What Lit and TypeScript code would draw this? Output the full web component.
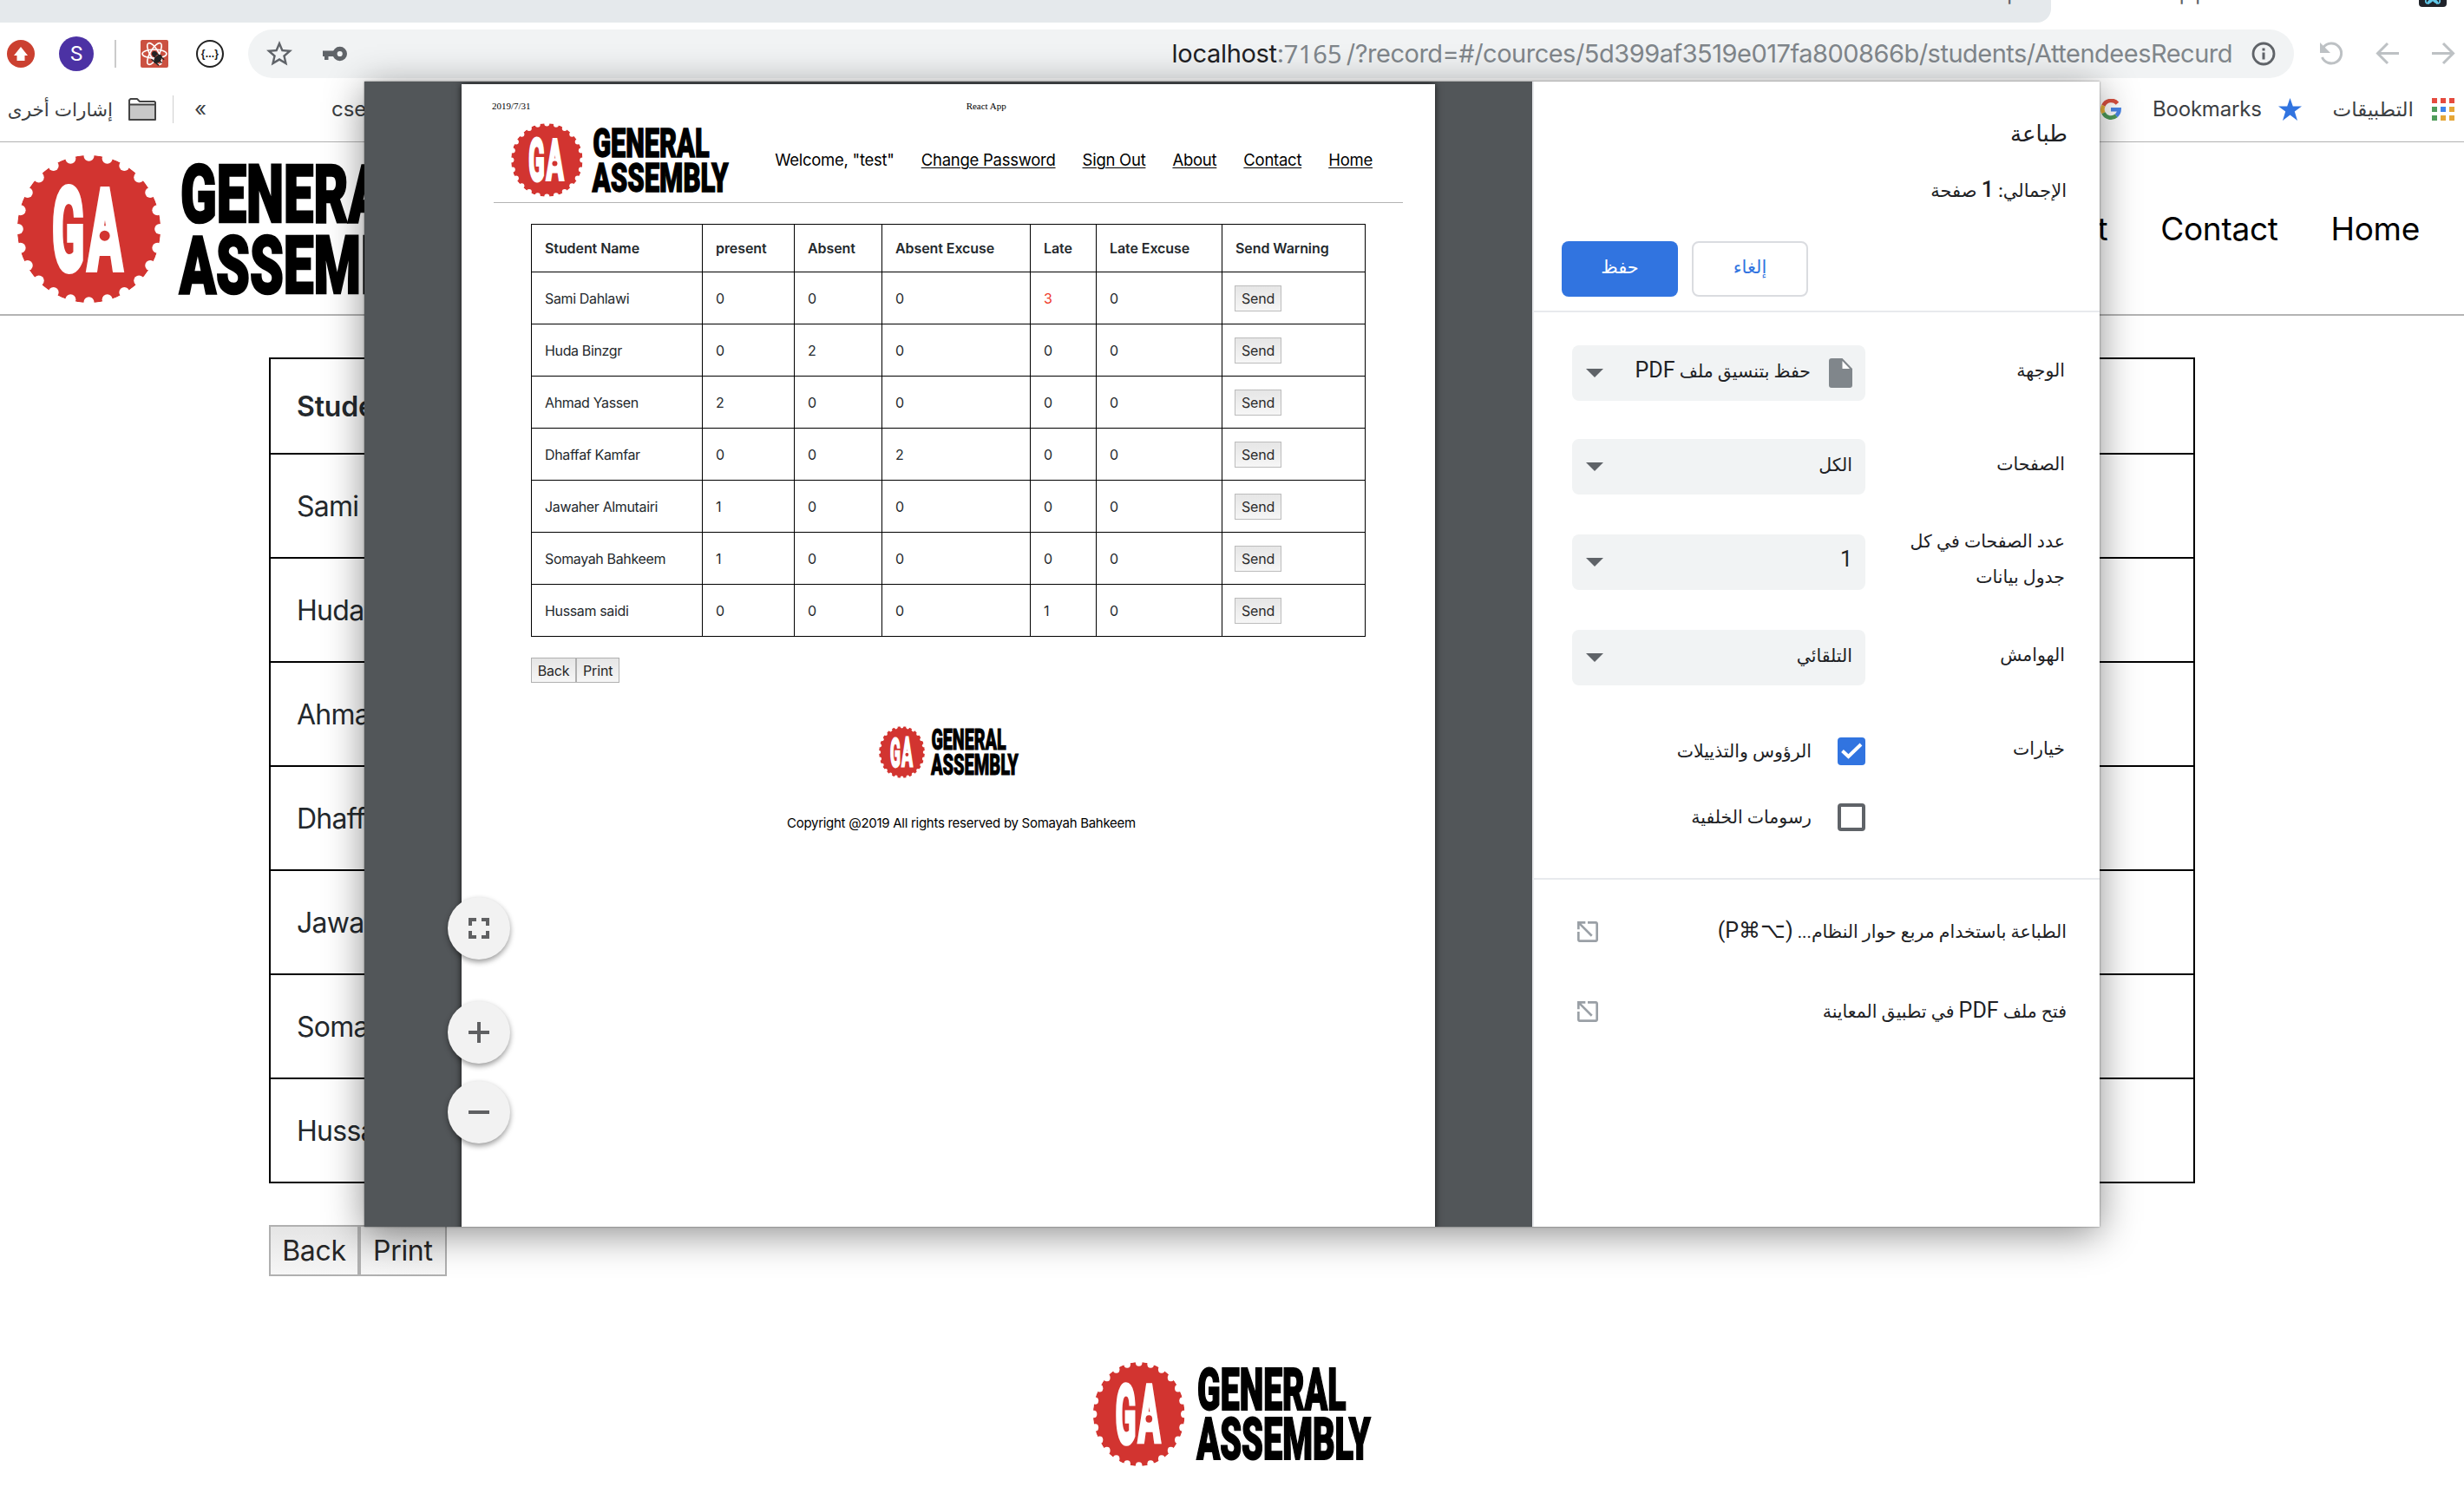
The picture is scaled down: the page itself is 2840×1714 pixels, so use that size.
import { LitElement, html, css, svg, nothing } from "lit";
import { customElement, property } from "lit/decorators.js";

type Student = { name: string; counts: number[] };

const STUDENTS: Student[] = [
  { name: "Sami Dahlawi", counts: [0, 0, 0, 3, 0] },
  { name: "Huda Binzgr", counts: [0, 2, 0, 0, 0] },
  { name: "Ahmad Yassen", counts: [2, 0, 0, 0, 0] },
  { name: "Dhaffaf Kamfar", counts: [0, 0, 2, 0, 0] },
  { name: "Jawaher Almutairi", counts: [1, 0, 0, 0, 0] },
  { name: "Somayah Bahkeem", counts: [1, 0, 0, 0, 0] },
  { name: "Hussam saidi", counts: [0, 0, 0, 1, 0] },
];

const COLUMNS = ["Student Name", "present", "Absent", "Absent Excuse", "Late", "Late Excuse", "Send Warning"];

/* Logo: notched red seal and the two-line wordmark. */
@customElement("ga-logo")
export class GaLogo extends LitElement {
  static styles = css`
    :host { display: block; }
    svg { display: block; width: 100%; height: 100%; overflow: visible; }
    .mono { font-family: Roboto, sans-serif; font-weight: 700; fill: #fff; stroke: #fff; }
    .word { font-family: Roboto, sans-serif; font-weight: 900; fill: #000; stroke: #000; }
  `;
  render() {
    const notches = Array.from({ length: 24 }, (_, i) => {
      const a = (i * Math.PI) / 12;
      return { x: 307.5 + 245 * Math.sin(a), y: 311.5 - 252 * Math.cos(a) };
    });
    return html`<svg viewBox="60 57 1503 509" preserveAspectRatio="none">
      <defs>
        <mask id="seal">
          <ellipse cx="307.5" cy="311.5" rx="248" ry="255" fill="#fff" />
          ${notches.map((n) => svg`<circle cx=${n.x} cy=${n.y} r="18" fill="#000" />`)}
        </mask>
      </defs>
      <ellipse cx="307.5" cy="311.5" rx="248" ry="255" fill="#d23430" mask="url(#seal)" />
      <g class="mono">
        <text transform="translate(181 453) scale(0.37 1)" font-size="396" stroke-width="24" textLength="298" lengthAdjust="spacingAndGlyphs">G</text>
        <text transform="translate(304 449) scale(0.37 1)" font-size="386" stroke-width="24" textLength="320" lengthAdjust="spacingAndGlyphs">A</text>
      </g>
      <polygon points="340,300 384,300 390,388 335,388" fill="#fff" />
      <circle cx="362" cy="335" r="18" fill="#d23430" />
      <g class="word">
        <text transform="translate(624 289) scale(0.5 1)" font-size="280" stroke-width="8" textLength="1610" lengthAdjust="spacingAndGlyphs">GENERAL</text>
        <text transform="translate(620 533) scale(0.5 1)" font-size="280" stroke-width="8" textLength="1882" lengthAdjust="spacingAndGlyphs">ASSEMBLY</text>
      </g>
    </svg>`;
  }
}

/* Attendance grid; --u is the size of one unit and scales the whole table.
   With "compact" set only the name column carries text. */
@customElement("attendance-table")
export class AttendanceTable extends LitElement {
  @property({ type: Boolean }) compact = false;
  static styles = css`
    :host { display: block; box-sizing: border-box; font-family: Inter, sans-serif; color: #24292d; }
    .table { border-right: var(--u) solid #000; border-bottom: var(--u) solid #000; }
    .row { display: grid; grid-template-columns: 197fr 106fr 101fr 171fr 76fr 145fr 165fr; height: calc(60 * var(--u)); }
    .cell {
      box-sizing: border-box; min-width: 0; display: flex; align-items: center; white-space: nowrap;
      border-left: var(--u) solid #000; border-top: var(--u) solid #000; padding-left: calc(15 * var(--u));
      font-size: calc(16 * var(--u)); letter-spacing: calc(-0.36 * var(--u));
    }
    .head { height: calc(55 * var(--u)); }
    .head .cell { font-weight: 600; letter-spacing: calc(-0.08 * var(--u)); }
    .warn { color: #ee3a2c; }
    .send {
      box-sizing: border-box; width: calc(54 * var(--u)); height: calc(30 * var(--u)); margin-left: calc(-1 * var(--u));
      display: flex; align-items: center; justify-content: center; color: #2b2b2b; letter-spacing: calc(-0.18 * var(--u));
      border: var(--u) solid #bcbcbc; background: linear-gradient(#e6e6e6, #f6f6f6);
    }
  `;
  render() {
    const full = !this.compact;
    return html`<div class="table">
      <div class="row head">${COLUMNS.map((c, i) => html`<div class="cell">${full || i === 0 ? c : nothing}</div>`)}</div>
      ${STUDENTS.map(
        (s) => html`<div class="row">
          <div class="cell">${s.name}</div>
          ${s.counts.map((n, i) => html`<div class="cell ${i === 3 && n > 2 ? "warn" : ""}">${full ? n : nothing}</div>`)}
          <div class="cell">${full ? html`<span class="send">Send</span>` : nothing}</div>
        </div>`
      )}
    </div>`;
  }
}

@customElement("button-pair")
export class ButtonPair extends LitElement {
  static styles = css`
    :host { display: flex; font-family: Inter, sans-serif; color: #262626; }
    .btn {
      box-sizing: border-box; height: calc(29.3 * var(--u)); display: flex; align-items: center; justify-content: center;
      font-size: calc(16 * var(--u)); letter-spacing: calc(-0.16 * var(--u));
      border: var(--u) solid #b0b0b0; background: linear-gradient(#e5e5e5, #f6f6f6);
    }
    .back { width: calc(52 * var(--u)); }
    .print { width: calc(50.3 * var(--u)); }
  `;
  render() {
    return html`<span class="btn back">Back</span><span class="btn print">Print</span>`;
  }
}

/* Browser window: tab strip, address bar and bookmarks, mirrored for a right-to-left locale. */
@customElement("browser-chrome")
export class BrowserChrome extends LitElement {
  static styles = css`
    :host { display: block; background: #fff; font-family: Inter, "DejaVu Sans", sans-serif; color: #3c4043; }
    svg { display: block; flex: none; }
    .tabs { height: 26px; display: flex; overflow: hidden; }
    .idle { width: 2364px; height: 26px; background: #e5e9ec; border-bottom-right-radius: 16px; flex: none; display: flex; justify-content: flex-end; }
    .clip { height: 26px; font-size: 24px; line-height: 30px; margin-top: -23px; color: #5f6368; white-space: nowrap; }
    .idle .clip { margin-right: 36px; }
    .active { margin-left: 22px; width: 150px; letter-spacing: 4px; word-spacing: 10px; flex: none; }
    .fav { width: 32px; height: 8px; margin-left: 252px; background: #20232a; border-radius: 0 0 4px 4px; display: flex; justify-content: center; }
    .bar { height: 72px; display: flex; align-items: center; padding-left: 8px; }
    .up { margin-right: 28px; }
    .avatar { width: 40px; height: 40px; border-radius: 50%; background: #4c32a4; color: #fff; display: flex; align-items: center; justify-content: center; font: 24px Roboto, sans-serif; }
    .sep { width: 2px; height: 32px; background: #cbcbcb; margin: 0 28px 0 24px; }
    .json { box-sizing: border-box; width: 32px; height: 32px; border: 2px solid #222; border-radius: 50%; margin: 0 28px 0 32px; display: flex; align-items: center; justify-content: center; font: bold 12px "Liberation Sans", sans-serif; color: #222; letter-spacing: 0.2px; }
    .omni { width: 2358px; height: 56px; box-sizing: border-box; border-radius: 28px; background: #f1f3f4; display: flex; align-items: center; padding: 0 21px 0 18px; }
    .key { margin-left: 32px; }
    .url { margin-left: auto; display: flex; align-items: center; font-size: 29px; color: #80868b; letter-spacing: -0.5px; white-space: pre; line-height: 56px; }
    .host { color: #202124; letter-spacing: -0.3px; }
    .port { font-family: "Noto Sans", sans-serif; font-size: 29px; letter-spacing: 0.2px; margin-right: 5px; }
    .info { margin-left: 22px; }
    .reload { margin-left: 28px; }
    .nav { margin-left: 36px; }
    .marks { height: 56px; display: flex; align-items: center; padding: 0 11px 9px 9px; border-bottom: 1px solid #b2b2b2; font-size: 24px; line-height: 40px; white-space: nowrap; }
    .ar { font-size: 23px; }
    .other { width: 121px; font-size: 21.500px; }
    .folder { margin-left: 18px; }
    .thin { width: 1px; height: 32px; background: #cfcfcf; margin: 0 24px 0 19px; }
    .cse { margin-left: 144px; }
    .g { margin-left: auto; }
    .bm { margin-left: 36px; letter-spacing: -0.2px; }
    .star { margin: 0 36px 0 19px; }
    .apps { margin-left: 21px; }
  `;
  private arrow(flip: boolean) {
    return html`<svg class="nav" width="28" height="28" viewBox="0 0 28 28" fill="none" stroke="#bdc1c4" stroke-width="3">
      <g transform=${flip ? "translate(28 0) scale(-1 1)" : "translate(0 0)"}><path d="M27 13.5H3M14 2 2.5 13.5 14 25" /></g>
    </svg>`;
  }
  render() {
    const dots = ["#e54b3f", "#e54b3f", "#e54b3f", "#4f9c5a", "#3f84ec", "#e5a637", "#4f9c5a", "#e5a637", "#e5a637"];
    return html`
      <div class="tabs">
        <div class="idle"><span class="clip">p</span></div>
        <span class="clip active">React App</span>
        <div class="fav"><svg width="24" height="8" viewBox="0 0 24 8" fill="none" stroke="#61c8e8" stroke-width="1.8"><path d="M4 0c-1 4 3 6 8 0 5 6 9 4 8 0M12 0C6 0 6 4 8 4M12 0c6 0 6 4 4 4" /></svg></div>
      </div>
      <div class="bar">
        <svg class="up" width="32" height="32" viewBox="0 0 32 32"><circle cx="16" cy="16" r="16" fill="#cb4030" /><path d="M16 8 24 18H20.5V24H11.5V18H8Z" fill="#fff" /></svg>
        <span class="avatar">S</span>
        <span class="sep"></span>
        <svg width="32" height="32" viewBox="0 0 32 32">
          <rect width="32" height="32" rx="2" fill="#cb5141" />
          <g fill="none" stroke="#fff" stroke-width="1.6"><ellipse cx="16" cy="16" rx="14" ry="5" /><ellipse cx="16" cy="16" rx="14" ry="5" transform="rotate(60 16 16)" /><ellipse cx="16" cy="16" rx="14" ry="5" transform="rotate(120 16 16)" /></g>
          <circle cx="16" cy="16" r="3" fill="#222" />
          <g transform="rotate(40 20 22)" fill="#222" stroke="#222"><ellipse cx="20" cy="22" rx="3" ry="5.500" /><path d="M14 18h12M13.500 22.500h13M14.500 27h11" stroke-width="1.400" /></g>
        </svg>
        <span class="json">{...}</span>
        <div class="omni">
          <svg width="36" height="36" viewBox="0 0 24 24" fill="#5f6368"><path d="M22 9.240l-7.190-.62L12 2 9.190 8.630 2 9.240l5.460 4.730L5.820 21 12 17.270 18.180 21l-1.630-7.030L22 9.240zM12 15.400l-3.760 2.270 1-4.280-3.320-2.880 4.380-.38L12 6.100l1.710 4.040 4.380.38-3.320 2.880 1 4.280L12 15.400z" /></svg>
          <svg class="key" width="28" height="18" viewBox="0 0 28 18"><circle cx="19.700" cy="9" r="5.700" fill="none" stroke="#5f6368" stroke-width="5.200" /><path d="M0 5.500h14v6.500H6.500V16H2V12H0Z" fill="#5f6368" /></svg>
          <div class="url"><span class="host">localhost</span><span>:</span><span class="port">7165</span><span>/?record=#/cources/5d399af3519e017fa800866b/students/AttendeesRecurd</span></div>
          <svg class="info" width="28" height="28" viewBox="0 0 28 28"><circle cx="14" cy="14" r="12" fill="none" stroke="#5f6368" stroke-width="2.800" /><path d="M12.500 12.500h3v8h-3zM12.500 7.500h3v3h-3z" fill="#5f6368" /></svg>
        </div>
        <svg class="reload" width="30" height="30" viewBox="0 0 30 30"><path d="M6 7.500A11.500 11.500 0 1 1 4.500 19" fill="none" stroke="#bdc1c4" stroke-width="3" /><path d="M2 2v12h12Z" fill="#bdc1c4" /></svg>
        ${this.arrow(false)}${this.arrow(true)}
      </div>
      <div class="marks">
        <span class="ar other" dir="rtl">إشارات أخرى</span>
        <svg class="folder" width="32" height="26" viewBox="0 0 32 26"><path d="M1 24V2.500L2.500 1H10l3 3H30l1 1V24Z" fill="#fff" stroke="#444" stroke-width="2" stroke-linejoin="round" /><path d="M1 7.500H31V25H1Z" fill="#c8c8c8" stroke="#444" stroke-width="2" stroke-linejoin="round" /></svg>
        <span class="thin"></span><span>«</span><span class="cse">cse</span>
        <svg class="g" width="24" height="24" viewBox="0 0 24 24" fill="none" stroke-width="4.600"><path d="M19.500 5.200A9.700 9.700 0 0 0 3.400 7.700" stroke="#d9503f" /><path d="M3.400 7.700a9.700 9.700 0 0 0 0 8.600" stroke="#e5b137" /><path d="M3.400 16.300A9.700 9.700 0 0 0 18.200 19.400" stroke="#4f9c5a" /><path d="M18.200 19.400A9.700 9.700 0 0 0 21.600 12.300H12" stroke="#4a86e8" /></svg>
        <span class="bm">Bookmarks</span>
        <svg class="star" width="27" height="26" viewBox="0 0 27 26"><path d="M13.500 0 16.800 9.500H27L18.800 15.500 22 26 13.500 19.500 5 26 8.200 15.500 0 9.500H10.200Z" fill="#3174e0" /></svg>
        <span class="ar" dir="rtl">التطبيقات</span>
        <svg class="apps" width="26" height="26" viewBox="0 0 26 26">${dots.map((c, i) => svg`<rect x=${(i % 3) * 10} y=${Math.floor(i / 3) * 10} width="6" height="6" fill=${c} />`)}</svg>
      </div>`;
  }
}

@customElement("print-dialog")
export class PrintDialog extends LitElement {
  static styles = css`
    :host { display: flex; background: #525659; font-family: Inter, sans-serif; }
    svg { display: block; flex: none; }
    .preview { width: 1346px; position: relative; overflow: hidden; flex: none; }
    .paper { box-sizing: border-box; width: 1122px; height: 1340px; margin: 3px 0 0 112px; background: #fff; box-shadow: 0 0 8px rgba(0, 0, 0, 0.75); --u: 1px; display: flex; flex-direction: column; }
    .meta { height: 14px; display: flex; font: 11px/14px "Liberation Serif", serif; margin: 18px 0 0 35px; color: #000; }
    .doc { margin-left: 502px; }
    .head { height: 105px; width: 1048px; box-sizing: border-box; margin-left: 37px; padding-left: 20px; border-bottom: 1px solid #b4b4b4; display: flex; padding-top: 13px; }
    .logo { width: 251px; height: 85px; }
    .links { display: flex; margin-left: auto; margin-right: 35px; gap: 31px; font-size: 18.500px; letter-spacing: -0.26px; line-height: 85px; color: #000; white-space: nowrap; }
    .link { text-decoration: underline; text-decoration-thickness: 1px; text-underline-offset: 2px; }
    .grid { width: 962px; margin: 24px 0 0 80px; }
    .buttons { margin: 24px 0 0 80px; }
    .foot { width: 161px; height: 60px; margin: 50px 0 0 481px; }
    .copy { margin: 40px 0 0 375px; font-size: 15px; letter-spacing: -0.28px; line-height: 24px; color: #000; white-space: nowrap; }
    .fabs { position: absolute; left: 96px; top: 940px; }
    .fab { width: 72px; height: 72px; border-radius: 50%; background: #f2f2f2; box-shadow: 0 3px 6px rgba(0, 0, 0, 0.4); display: flex; align-items: center; justify-content: center; margin-bottom: 20px; }
    .first { margin-bottom: 48px; }

    .panel { flex: 1; border-left: 2px solid #e8eaed; background: #fff; direction: rtl; font: 26px/44px Roboto, "DejaVu Sans", sans-serif; color: #202124; display: flex; flex-direction: column; white-space: nowrap; }
    .title { height: 44px; margin: 38px 37px 0 0; font-size: 26px; }
    .total { height: 44px; margin: 22px 38px 0 0; font-size: 21px; font-weight: 500; }
    .actions { display: flex; flex-direction: row-reverse; justify-content: flex-end; direction: ltr; height: 64px; margin: 36px 0 0 32px; gap: 16px; }
    .act { box-sizing: border-box; width: 134px; border-radius: 8px; display: flex; align-items: center; justify-content: center; font-size: 21px; font-weight: 500; padding-bottom: 5px; }
    .save { background: #3174e0; color: #fff; }
    .cancel { border: 2px solid #dadce0; color: #3174e0; }
    .rule { height: 2px; background: #e8eaed; flex: none; }
    .set { display: flex; flex: none; justify-content: space-between; align-items: center; height: 64px; margin: 0 40px 0 44px; font-size: 20.500px; }
    .lab { margin-bottom: 6px; line-height: 41px; }
    .select { width: 338px; height: 64px; box-sizing: border-box; border-radius: 8px; background: #f1f3f4; display: flex; align-items: center; padding: 0 15px 0 16px; }
    .val { margin-bottom: 4px; }
    .lat { font-size: 25px; line-height: 1; }
    .pdf { margin-left: 21px; }
    .tri { margin-right: auto; }
    .opts { display: flex; margin: 0 40px 0 44px; justify-content: space-between; height: 162px; flex: none; font-size: 20.500px; }
    .opt { display: flex; align-items: center; height: 32px; margin-bottom: 44px; }
    .optlist { width: 338px; }
    .box { box-sizing: border-box; width: 32px; height: 32px; border-radius: 4px; border: 4px solid #5f6368; margin-left: 30px; flex: none; }
    .on { border: 0; background: #3174e0; }
    .ext { display: flex; justify-content: space-between; align-items: center; height: 44px; margin: 0 38px 0 50px; flex: none; font-size: 20.500px; }
  `;
  private select(label: unknown, value: unknown, top: number, icon = false) {
    return html`<div class="set" style="margin-top:${top}px">
      <span class="lab">${label}</span>
      <div class="select">
        ${icon ? html`<svg class="pdf" width="27" height="34" viewBox="0 0 27 34"><path d="M3 0H15.500L27 12V31a3 3 0 0 1-3 3H3a3 3 0 0 1-3-3V3a3 3 0 0 1 3-3Z" fill="#80868b" /><path d="M15.500 3V12H24Z" fill="#fff" /></svg>` : nothing}
        <span class="val">${value}</span>
        <svg class="tri" width="20" height="10" viewBox="0 0 20 10"><path d="M0 0H20L10 10Z" fill="#5f6368" /></svg>
      </div>
    </div>`;
  }
  private external() {
    return html`<svg width="24" height="24" viewBox="3 3 18 18" fill="#9aa0a6"><g transform="translate(24 0) scale(-1 1)"><path d="M19 19H5V5h7V3H5c-1.110 0-2 .9-2 2v14c0 1.100.89 2 2 2h14c1.100 0 2-.9 2-2v-7h-2v7zM14 3v2h3.590l-9.830 9.830 1.410 1.410L19 6.410V10h2V3h-7z" /></g></svg>`;
  }
  private fab(d: string, cls = "") {
    return html`<span class="fab ${cls}"><svg width="24" height="24" viewBox="0 0 24 24" fill="none" stroke="#5f6062" stroke-width="4"><path d=${d} /></svg></span>`;
  }
  render() {
    return html`
      <div class="preview">
        <div class="paper">
          <div class="meta"><span>2019/7/31</span><span class="doc">React App</span></div>
          <div class="head">
            <ga-logo class="logo"></ga-logo>
            <div class="links">
              <span>Welcome, "test"</span>
              ${["Change Password", "Sign Out", "About", "Contact", "Home"].map((t) => html`<span class="link">${t}</span>`)}
            </div>
          </div>
          <attendance-table class="grid"></attendance-table>
          <button-pair class="buttons"></button-pair>
          <ga-logo class="foot"></ga-logo>
          <div class="copy">Copyright @2019 All rights reserved by Somayah Bahkeem</div>
        </div>
        <div class="fabs">
          ${this.fab("M2 9V2H9M15 2H22V9M22 15V22H15M9 22H2V15", "first")}
          ${this.fab("M12 0V24M0 12H24")}
          ${this.fab("M0 12H24")}
        </div>
      </div>
      <div class="panel">
        <div class="title">طباعة</div>
        <div class="total">الإجمالي: <span class="lat">1</span> صفحة</div>
        <div class="actions"><span class="act cancel">إلغاء</span><span class="act save">حفظ</span></div>
        <div class="rule" style="margin-top:16px"></div>
        ${this.select("الوجهة", html`حفظ بتنسيق ملف <span class="lat">PDF</span>`, 38, true)}
        ${this.select("الصفحات", "الكل", 44)}
        ${this.select(html`عدد الصفحات في كل<br />جدول بيانات`, html`<span class="lat">1</span>`, 46)}
        ${this.select("الهوامش", "التلقائي", 46)}
        <div class="opts" style="margin-top:60px">
          <span class="lab" style="line-height:26px">خيارات</span>
          <div class="optlist">
            <div class="opt"><span class="box on"><svg width="32" height="32" viewBox="0 0 32 32"><path d="M5.500 15.500 12.500 22 27 8" fill="none" stroke="#fff" stroke-width="4" /></svg></span>الرؤوس والتذييلات</div>
            <div class="opt"><span class="box"></span>رسومات الخلفية</div>
          </div>
        </div>
        <div class="rule"></div>
        <div class="ext" style="margin-top:38px"><span>الطباعة باستخدام مربع حوار النظام... <span class="lat">(⌥⌘P)</span></span>${this.external()}</div>
        <div class="ext" style="margin-top:48px"><span>فتح ملف <span class="lat">PDF</span> في تطبيق المعاينة</span>${this.external()}</div>
      </div>`;
  }
}

@customElement("app-root")
export class AppRoot extends LitElement {
  static styles = css`
    :host { display: block; position: relative; width: 2840px; height: 1714px; overflow: hidden; background: #fff; font-family: Inter, sans-serif; --u: 2px; }
    .head { box-sizing: border-box; height: 200px; border-bottom: 2px solid #b4b4b4; display: flex; padding: 15px 51px 0 20px; }
    .logo { width: 501px; height: 170px; }
    .links { display: flex; margin-left: auto; gap: 61px; font-size: 37px; letter-spacing: -0.3px; line-height: 170px; color: #000; }
    .grid { width: 2220px; margin: 48px 0 0 310px; }
    .buttons { margin: 48px 0 0 310px; }
    .foot { width: 320px; height: 120px; margin: 99px 0 0 1260px; }
    .dialog { position: absolute; left: 420px; top: 94px; width: 2000px; height: 1320px; box-shadow: 0 0 2px rgba(0, 0, 0, 0.5), 0 8px 42px rgba(0, 0, 0, 0.45); }
  `;
  render() {
    return html`
      <browser-chrome></browser-chrome>
      <div class="head">
        <ga-logo class="logo"></ga-logo>
        <div class="links"><span>About</span><span>Contact</span><span>Home</span></div>
      </div>
      <attendance-table class="grid" compact></attendance-table>
      <button-pair class="buttons"></button-pair>
      <ga-logo class="foot"></ga-logo>
      <print-dialog class="dialog"></print-dialog>`;
  }
}
